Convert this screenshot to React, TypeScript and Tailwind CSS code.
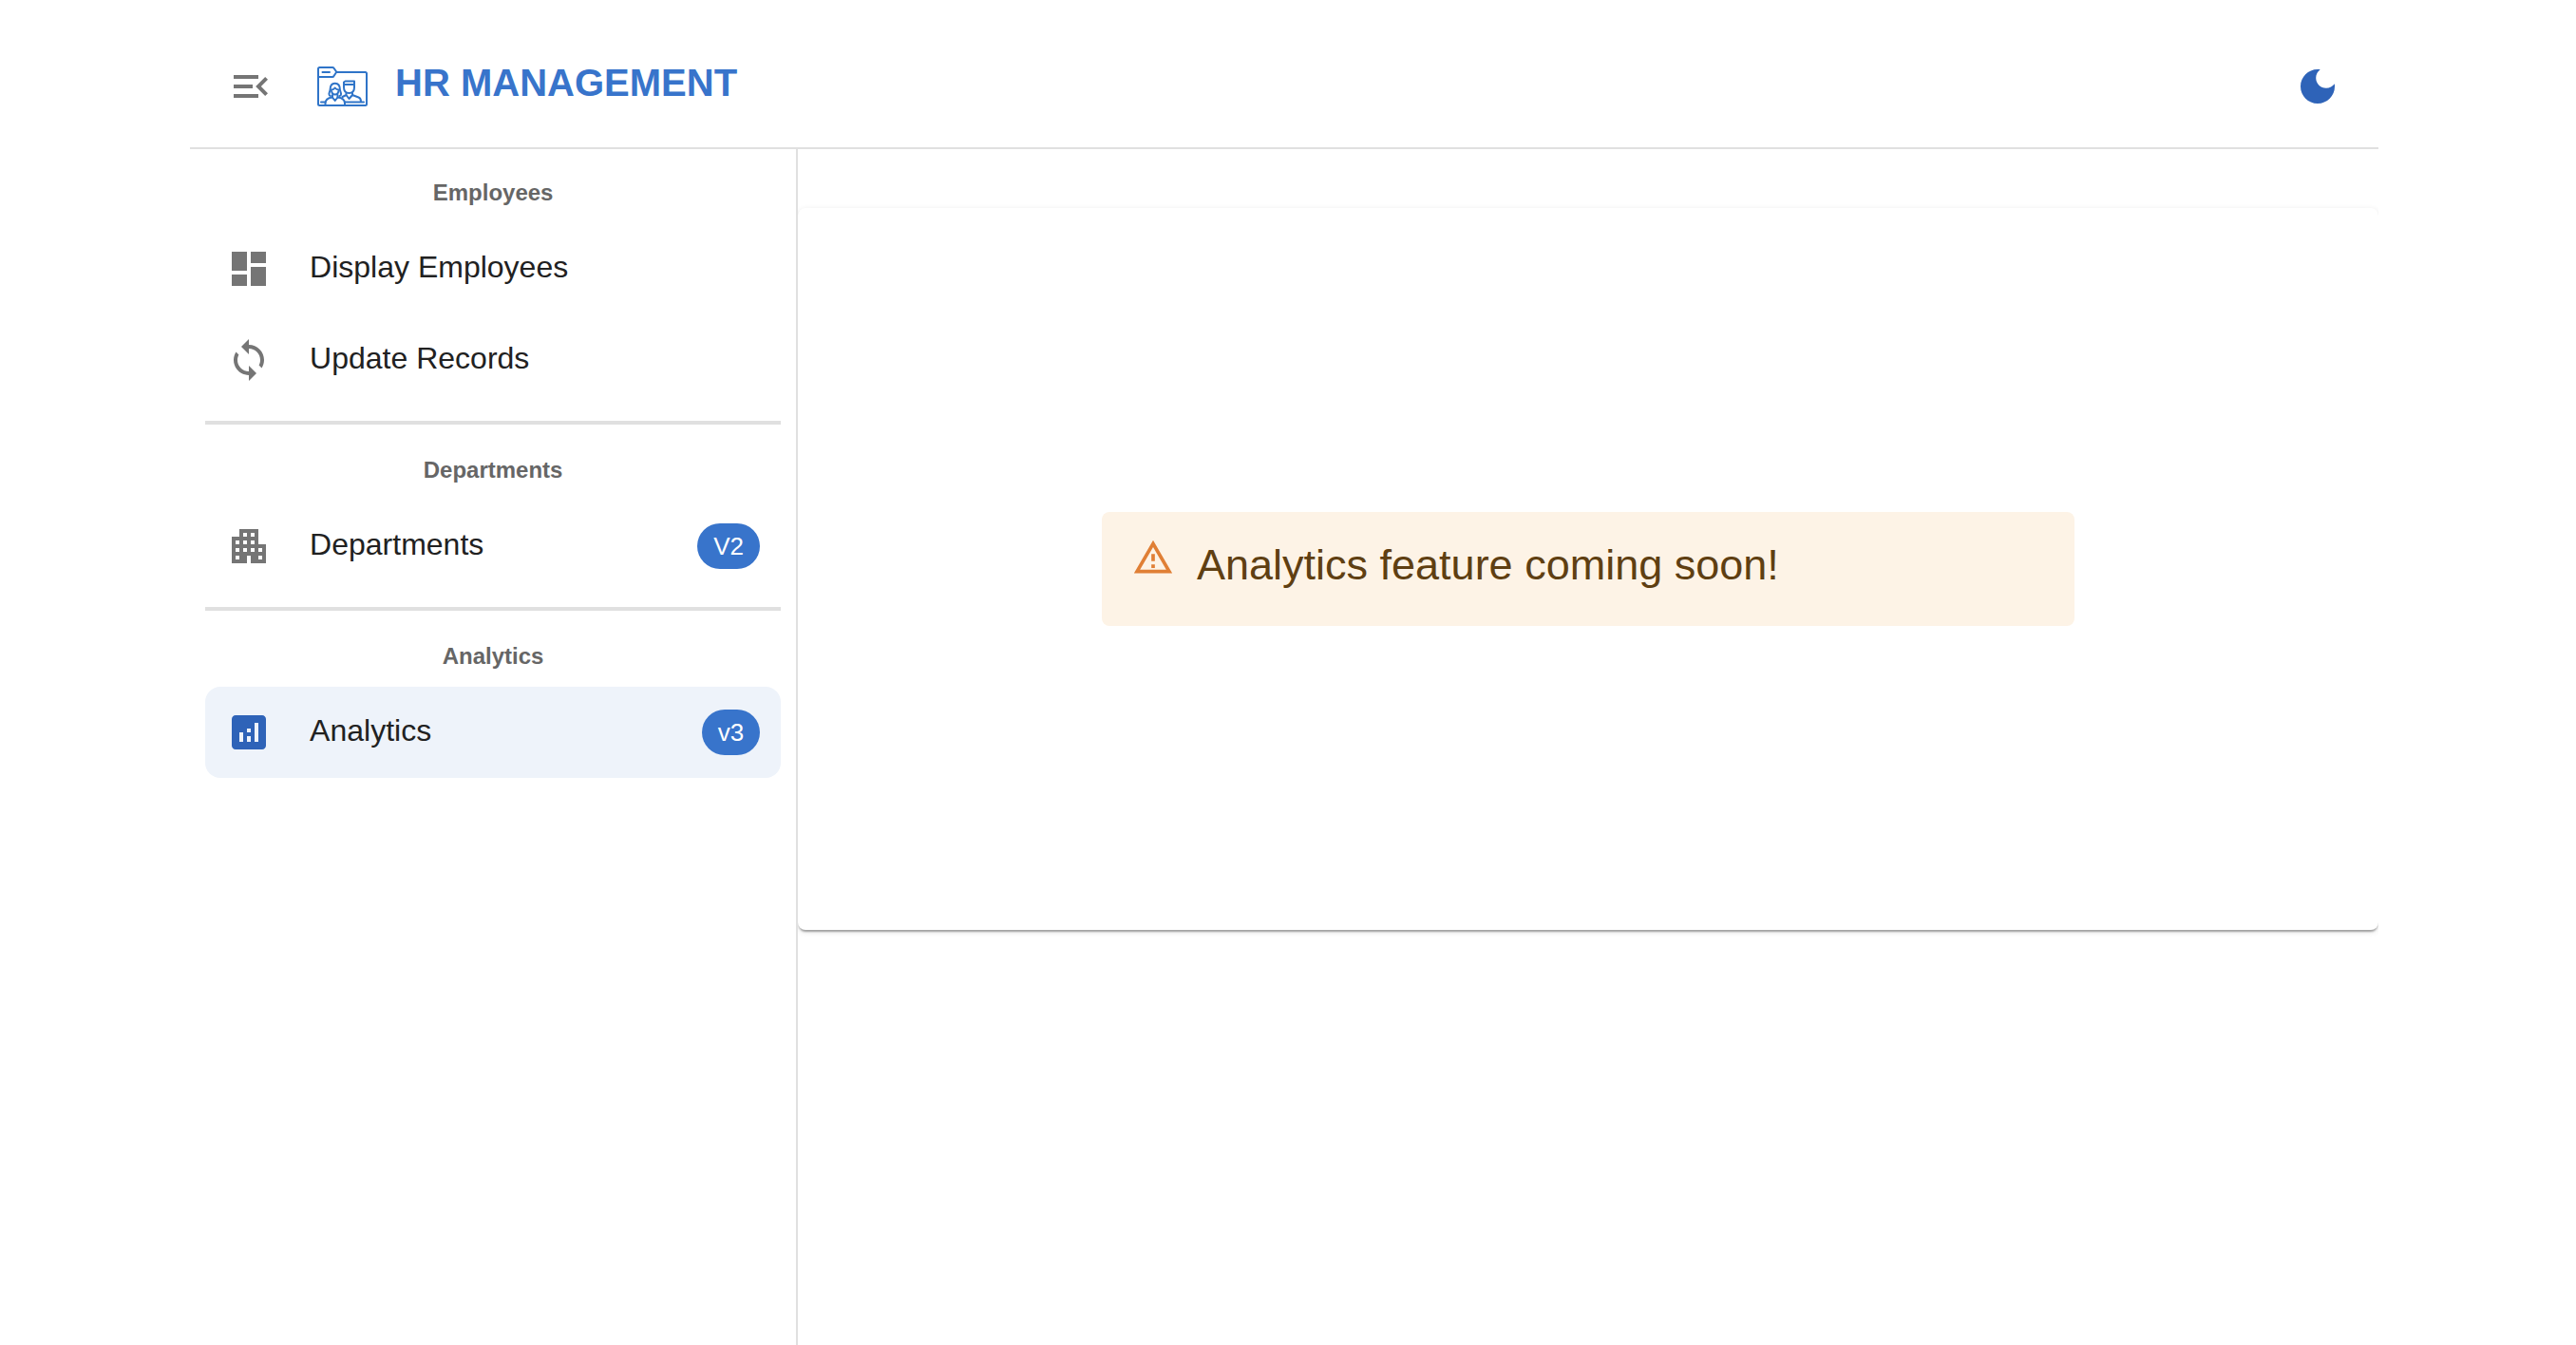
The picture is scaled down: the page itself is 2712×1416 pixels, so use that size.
import type { ReactNode } from "react";

type IconProps = { d: string; className: string };

function Icon({ d, className }: IconProps) {
  return (
    <svg viewBox="0 0 24 24" fill="currentColor" aria-hidden="true" className={className}>
      <path d={d} />
    </svg>
  );
}

const icons = {
  menuOpen:
    "M3 18h13v-2H3v2zm0-5h10v-2H3v2zm0-7v2h13V6H3zm18 9.59L17.42 12 21 8.41 19.59 7l-5 5 5 5L21 15.59z",
  moon: "M12 3c-4.97 0-9 4.03-9 9s4.03 9 9 9 9-4.03 9-9c0-.46-.04-.92-.1-1.36-.98 1.37-2.58 2.26-4.4 2.26-2.98 0-5.4-2.42-5.4-5.4 0-1.81.89-3.42 2.26-4.4-.44-.06-.9-.1-1.36-.1z",
  dashboard: "M3 13h8V3H3v10zm0 8h8v-6H3v6zm10 0h8V11h-8v10zm0-18v6h8V3h-8z",
  sync: "M12 4V1L8 5l4 4V6c3.31 0 6 2.69 6 6 0 1.01-.25 1.97-.7 2.8l1.46 1.46C19.54 15.03 20 13.57 20 12c0-4.42-3.58-8-8-8zm0 14c-3.31 0-6-2.69-6-6 0-1.01.25-1.97.7-2.8L5.24 7.74C4.46 8.97 4 10.43 4 12c0 4.42 3.58 8 8 8v3l4-4-4-4v3z",
  apartment:
    "M17 11V3H7v4H3v14h8v-4h2v4h8V11h-4zM7 19H5v-2h2v2zm0-4H5v-2h2v2zm0-4H5V9h2v2zm4 4H9v-2h2v2zm0-4H9V9h2v2zm0-4H9V5h2v2zm4 8h-2v-2h2v2zm0-4h-2V9h2v2zm0-4h-2V5h2v2zm4 12h-2v-2h2v2zm0-4h-2v-2h2v2z",
  analytics:
    "M19 3H5c-1.100 0-2 .9-2 2v14c0 1.100.9 2 2 2h14c1.100 0 2-.9 2-2V5c0-1.100-.9-2-2-2zM9 17H7v-5h2v5zm4 0h-2v-3h2v3zm0-5h-2v-2h2v2zm4 5h-2V7h2v10z",
  warning:
    "M12 5.99L19.53 19H4.47L12 5.99M12 2L1 21h22L12 2zm1 14h-2v2h2v-2zm0-6h-2v4h2v-4z",
};

function Logo() {
  return (
    <svg
      viewBox="0 0 56 44"
      fill="none"
      stroke="#2f74c8"
      strokeWidth="2"
      strokeLinecap="round"
      strokeLinejoin="round"
      aria-hidden="true"
      className="h-11 w-14"
    >
      <path d="M22 7H52.500Q54 7 54 8.500V40.500Q54 42 52.500 42H4.500Q3 42 3 40.500V3.500Q3 2 4.500 2H18Q19 2 19.700 3L22.300 6.700L19.500 11Q19 12 18 12H3M7.500 7H15" />
      <path d="M16 32C13.500 31.500 14.500 29 15.500 26C15.500 21 17 18.700 20.700 18.700S26 21 26 26C27 29 28 31.500 25.500 32" />
      <path d="M17 25.500C17 28.500 18.500 30.500 20.700 30.500S24.500 28.500 24.500 25.500C22.500 25.500 21.500 24.500 20.700 23.500C20 24.500 19 25.500 17 25.500Z" />
      <path d="M18 31V33.500L20.700 37L23.500 33.500V31" />
      <path d="M10.500 42V40C10.500 36 13 34 18 33.500M31 42V40C31 36 28.500 34 23.500 33.500" />
      <path d="M30 20V17.500L31.500 16.500H41V20H30V23C30 27 32 29 35.500 29S41 27 41 23V20" />
      <path d="M32.500 29V31L35.500 35L39 31V29M32.500 31L28.500 33M39 31L45.500 33.500Q48 34.500 48 38M6 38.500H10.500M31 38.500H51" />
    </svg>
  );
}

function SectionTitle({ children }: { children: ReactNode }) {
  return (
    <h2 className="flex h-16 items-center justify-center text-2xl font-bold text-[#666666]">
      {children}
    </h2>
  );
}

type NavItemProps = { icon: string; label: string; badge?: string; selected?: boolean };

function NavItem({ icon, label, badge, selected = false }: NavItemProps) {
  return (
    <li>
      <a
        href="#"
        aria-current={selected ? "page" : undefined}
        className={
          selected
            ? "flex h-24 items-center gap-10 rounded-2xl bg-[#eef3fa] px-[22px]"
            : "flex h-24 items-center gap-10 rounded-2xl px-[22px]"
        }
      >
        <Icon
          d={icon}
          className={selected ? "size-12 shrink-0 text-[#2e63b8]" : "size-12 shrink-0 text-[#757575]"}
        />
        <span className="grow whitespace-nowrap pb-1 text-[32px] leading-12 text-[#212121]">{label}</span>
        {badge && (
          <span className="flex h-12 items-center rounded-full bg-[#3874cb] px-[17px] text-[26px] text-white">
            {badge}
          </span>
        )}
      </a>
    </li>
  );
}

function Divider() {
  return <hr className="my-4 border-t-4 border-[#e0e0e0]" />;
}

export default function App() {
  return (
    <div className="bg-white pr-2 font-['Liberation_Sans',Arial,sans-serif]">
      <div className="mx-auto flex min-h-screen w-[85.2%] flex-col">
        <header className="flex items-center border-b-2 border-[#e0e0e0] px-10 pt-[59px] pb-8">
          <button type="button" aria-label="Collapse menu" className="text-[#757575]">
            <Icon d={icons.menuOpen} className="size-12" />
          </button>
          <a href="#" className="ml-11 flex items-center gap-7">
            <Logo />
            <h1 className="whitespace-nowrap pb-2 text-[40px] leading-14 font-bold text-[#3874cb]">
              HR MANAGEMENT
            </h1>
          </a>
          <button type="button" aria-label="Dark mode" className="ml-auto text-[#2e63b8]">
            <Icon d={icons.moon} className="size-12" />
          </button>
        </header>

        <div className="flex grow">
          <nav className="w-[640px] shrink-0 border-r-2 border-[#e0e0e0] px-4 pt-[14px]">
            <SectionTitle>Employees</SectionTitle>
            <ul>
              <NavItem icon={icons.dashboard} label="Display Employees" />
              <NavItem icon={icons.sync} label="Update Records" />
            </ul>
            <Divider />
            <SectionTitle>Departments</SectionTitle>
            <ul>
              <NavItem icon={icons.apartment} label="Departments" badge="V2" />
            </ul>
            <Divider />
            <SectionTitle>Analytics</SectionTitle>
            <ul>
              <NavItem icon={icons.analytics} label="Analytics" badge="v3" selected />
            </ul>
          </nav>

          <main className="grow overflow-hidden pt-[62px]">
            <section className="flex justify-center rounded-lg bg-white py-80 shadow-[0_4px_2px_-2px_rgba(0,0,0,0.2),0_2px_2px_0_rgba(0,0,0,0.14),0_2px_6px_0_rgba(0,0,0,0.12)]">
              <div role="alert" className="flex w-[1024px] items-start rounded-lg bg-[#fdf3e6] px-8 py-3">
                <Icon d={icons.warning} className="mt-[14px] mr-6 size-11 shrink-0 text-[#e07f35]" />
                <p className="pt-3 pb-5 text-[45px] leading-16 text-[#5f3f12]">
                  Analytics feature coming soon!
                </p>
              </div>
            </section>
          </main>
        </div>
      </div>
    </div>
  );
}
